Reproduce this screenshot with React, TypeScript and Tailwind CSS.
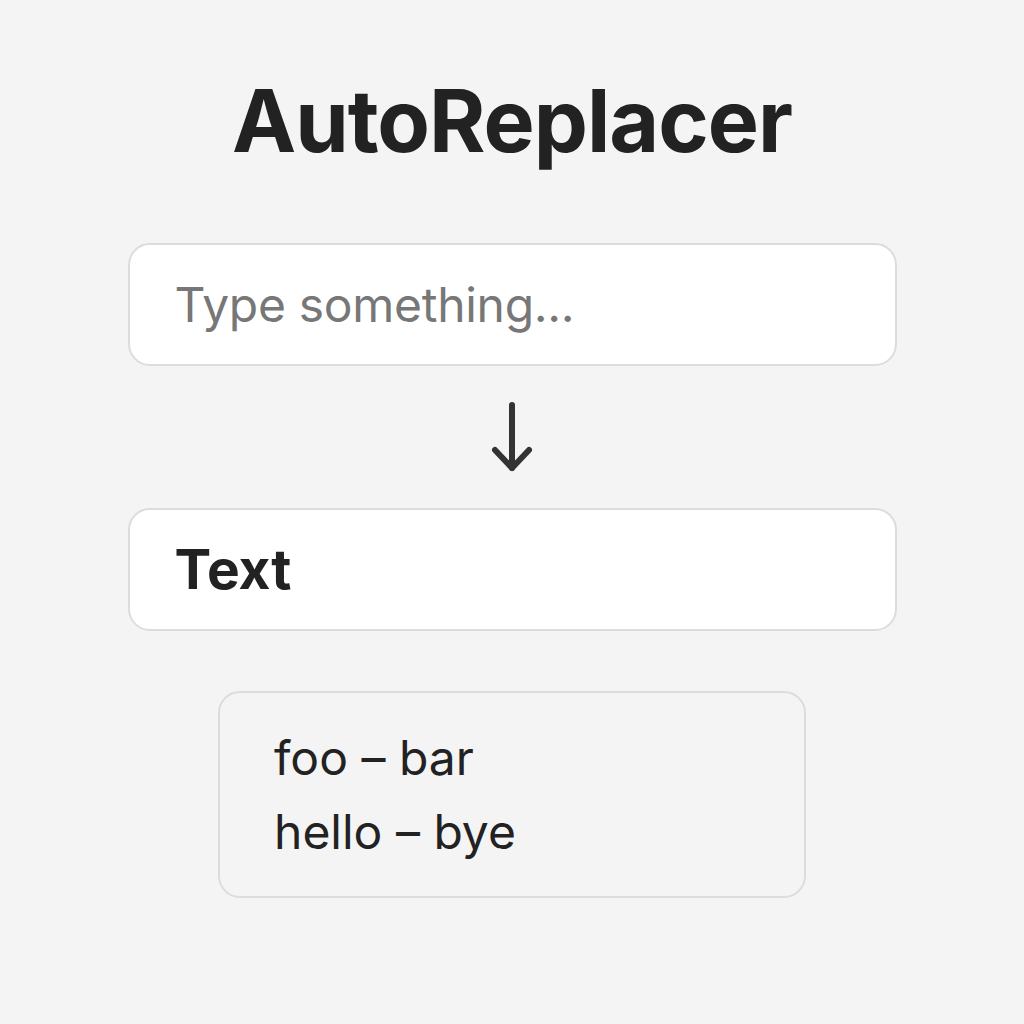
import { useState } from 'react'

const rules: [string, string][] = [
  ['foo', 'bar'],
  ['hello', 'bye'],
]

export default function App() {
  const [value, setValue] = useState('')

  const output = rules.reduce((acc, [from, to]) => acc.split(from).join(to), value) || 'Text'

  return (
    <div className="min-h-screen bg-[#f4f4f4] font-['Inter',sans-serif] text-[#222]">
      <div className="mx-auto flex w-[769px] flex-col items-center pt-[78px]">
        <h1 className="text-[86px] font-bold leading-none tracking-[-1px] text-[#222]">AutoReplacer</h1>

        <input
          value={value}
          onChange={e => setValue(e.target.value)}
          placeholder="Type something..."
          className="mt-[79px] h-[123px] w-full rounded-[22px] border-2 border-[#dcdcdc] bg-white px-[45px] text-[48px] tracking-[-0.3px] text-[#222] outline-none placeholder:text-[#777]"
        />

        <svg className="mt-[35px] h-[72px] w-[44px]" viewBox="0 0 44 72" fill="none" stroke="#333" strokeWidth="6" strokeLinecap="round" strokeLinejoin="round">
          <path d="M22 4 V67" />
          <path d="M5 49 L22 67 L39 49" />
        </svg>

        <div className="mt-[35px] flex h-[123px] w-full items-center rounded-[22px] border-2 border-[#dcdcdc] bg-white px-[45px]">
          <span className="text-[55px] font-bold text-[#222]">{output}</span>
        </div>

        <div className="mt-[60px] flex h-[207px] w-[588px] flex-col justify-center gap-[12px] rounded-[22px] border-2 border-[#dcdcdc] px-[54px]">
          {rules.map(([from, to]) => (
            <div key={from} className="text-[48px] leading-[62px] text-[#222]">
              {from} – {to}
            </div>
          ))}
        </div>
      </div>
    </div>
  )
}
